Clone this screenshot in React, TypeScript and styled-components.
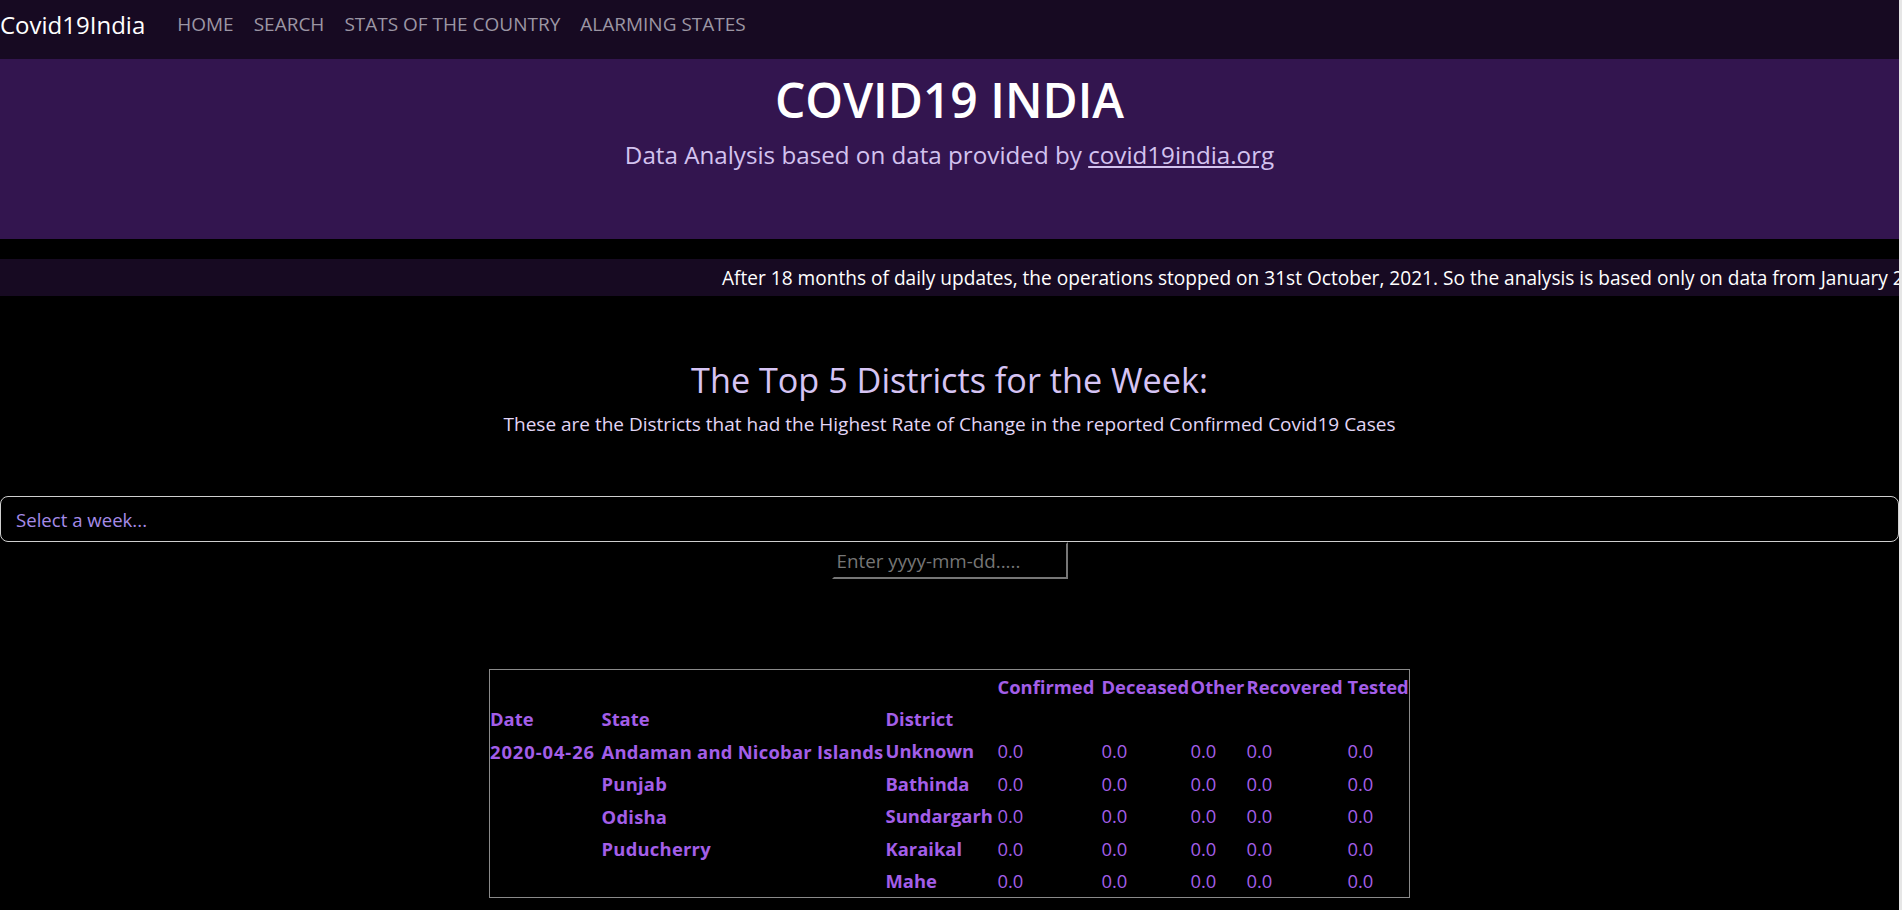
import React from "react";
import styled, { createGlobalStyle } from "styled-components";

const GlobalStyle = createGlobalStyle`
  html, body {
    margin: 0;
    padding: 0;
    background: #e6e6e6;
  }
  body {
    font-family: "Open Sans", "Noto Sans", sans-serif;
  }
  * { box-sizing: border-box; }
`;

const Page = styled.div`
  background: #000;
  margin-right: 3px;
  min-height: 910px;
  overflow: hidden;
`;

const Navbar = styled.nav`
  height: 59px;
  background: #170a22;
  display: flex;
  align-items: center;
  padding-bottom: 11px;
`;

const Brand = styled.a`
  color: #fff;
  font-size: 24px;
  margin-right: 32px;
  text-decoration: none;
`;

const NavList = styled.div`
  display: flex;
  gap: 20px;
`;

const NavLink = styled.a`
  color: #9c96a4;
  font-size: 19px;
  text-decoration: none;
  text-transform: uppercase;
`;

const Jumbotron = styled.header`
  height: 180px;
  background: #33154f;
  display: flex;
  flex-direction: column;
  align-items: center;
  padding-top: 12px;
`;

const Title = styled.h1`
  margin: 0;
  font-size: 48px;
  font-weight: 600;
  color: #fff;
  line-height: 1.2;
`;

const Lead = styled.p`
  margin: 9px 0 0;
  font-size: 24.2px;
  font-weight: 500;
  color: #d3c3ef;
`;

const LeadLink = styled.a`
  color: #d3c3ef;
  text-decoration: underline;
`;

const Ticker = styled.div`
  margin-top: 20px;
  height: 37px;
  background: #170a22;
  display: flex;
  align-items: center;
  overflow: hidden;
  white-space: nowrap;
`;

const TickerText = styled.span`
  padding-left: 722px;
  color: #fff;
  font-size: 19.1px;
`;

const Section = styled.section`
  display: flex;
  flex-direction: column;
  align-items: center;
  padding-top: 63px;
`;

const SectionTitle = styled.h2`
  margin: 0;
  font-size: 34.2px;
  font-weight: 500;
  color: #d6c4f4;
  line-height: 1.2;
`;

const SectionText = styled.p`
  margin: 11px 0 0;
  font-size: 19px;
  color: #e2d6f6;
`;

const WeekSelect = styled.div`
  margin-top: 59px;
  height: 46px;
  width: 100%;
  border: 1.5px solid #cfcfcf;
  border-radius: 8px;
  display: flex;
  align-items: center;
  padding-left: 15px;
  color: #a58be8;
  font-size: 18.6px;
`;

const DateInput = styled.input`
  width: 236px;
  height: 37px;
  background: #000;
  border: 2px inset #767676;
  border-top-color: #3a3a3a;
  border-left-color: #3a3a3a;
  color: #ccc;
  font-family: "Open Sans", sans-serif;
  font-size: 18.8px;
  padding: 0 3px;
  outline: none;
  &::placeholder {
    color: #767676;
  }
`;

const Table = styled.table`
  margin-top: 90px;
  border: 1px solid #8a8a8a;
  border-collapse: collapse;
  table-layout: fixed;
  width: 920px;
  color: #a35ee8;
  font-size: 18.4px;
`;

const Row = styled.tr`
  height: 32.5px;
`;

const Th = styled.th`
  padding: 0;
  text-align: left;
  font-weight: 700;
  white-space: nowrap;
  vertical-align: middle;
`;

const IndexTh = styled(Th)<{ $spread?: boolean }>`
  vertical-align: top;
  padding-top: 4px;
  letter-spacing: ${(p) => (p.$spread ? "0.9px" : "0.25px")};
`;

const Td = styled.td`
  padding: 0;
  text-align: left;
  font-weight: 400;
  white-space: nowrap;
`;

const colWidths = [112, 284, 112, 104, 89, 56, 101, 62];
const metrics = ["Confirmed", "Deceased", "Other", "Recovered", "Tested"];

const rows = [
  { date: "2020-04-26", state: "Andaman and Nicobar Islands", district: "Unknown" },
  { state: "Punjab", district: "Bathinda" },
  { state: "Odisha", district: "Sundargarh" },
  { state: "Puducherry", district: "Karaikal", stateSpan: 2 },
  { district: "Mahe" },
];

export default function App() {
  return (
    <>
      <GlobalStyle />
      <Page>
        <Navbar>
          <Brand href="#">Covid19India</Brand>
          <NavList>
            <NavLink href="#">Home</NavLink>
            <NavLink href="#">Search</NavLink>
            <NavLink href="#">Stats of the Country</NavLink>
            <NavLink href="#">Alarming States</NavLink>
          </NavList>
        </Navbar>
        <Jumbotron>
          <Title>COVID19 INDIA</Title>
          <Lead>
            Data Analysis based on data provided by <LeadLink href="#">covid19india.org</LeadLink>
          </Lead>
        </Jumbotron>
        <Ticker>
          <TickerText>
            After 18 months of daily updates, the operations stopped on 31st October, 2021. So the analysis is based only on data from January 2020 to October 2021.
          </TickerText>
        </Ticker>
        <Section>
          <SectionTitle>The Top 5 Districts for the Week:</SectionTitle>
          <SectionText>
            These are the Districts that had the Highest Rate of Change in the reported Confirmed Covid19 Cases
          </SectionText>
          <WeekSelect>Select a week...</WeekSelect>
          <DateInput placeholder="Enter yyyy-mm-dd....." />
          <Table>
            <colgroup>
              {colWidths.map((w, i) => (
                <col key={i} style={{ width: w }} />
              ))}
            </colgroup>
            <thead>
              <Row>
                <Th />
                <Th />
                <Th />
                {metrics.map((m) => (
                  <Th key={m}>{m}</Th>
                ))}
              </Row>
              <Row>
                <Th>Date</Th>
                <Th>State</Th>
                <Th>District</Th>
                {metrics.map((m) => (
                  <Th key={m} />
                ))}
              </Row>
            </thead>
            <tbody>
              {rows.map((r, i) => (
                <Row key={i}>
                  {r.date && (
                    <IndexTh $spread rowSpan={5}>
                      {r.date}
                    </IndexTh>
                  )}
                  {r.state && <IndexTh rowSpan={r.stateSpan || 1}>{r.state}</IndexTh>}
                  <Th>{r.district}</Th>
                  {metrics.map((m) => (
                    <Td key={m}>0.0</Td>
                  ))}
                </Row>
              ))}
            </tbody>
          </Table>
        </Section>
      </Page>
    </>
  );
}
